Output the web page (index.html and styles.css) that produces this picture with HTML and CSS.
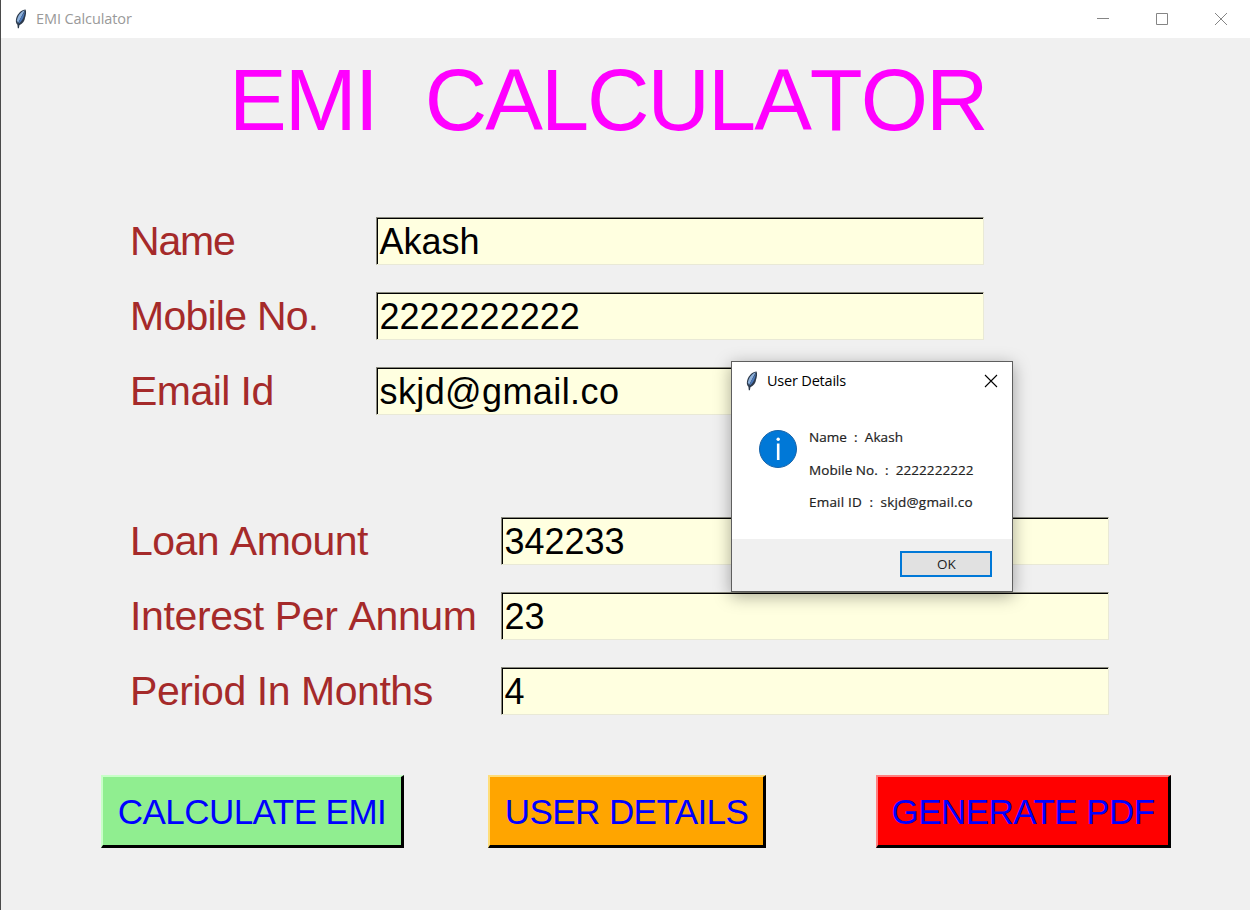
FILE: index.html
```html
<!DOCTYPE html>
<html lang="en">
<head>
<meta charset="utf-8">
<title>EMI Calculator</title>
<link rel="stylesheet" href="styles.css">
</head>
<body>
<svg width="0" height="0" class="defs" aria-hidden="true">
  <symbol id="feather" viewBox="0 0 12 20">
    <path d="M10.600.5C6.800.7 2.600 4.400 1.200 9.200.5 12 .8 14 2.400 15.800L2.800 19.300h1.100l.5-3C8 14.500 9.700 11.500 10 9c1-2.700 1.500-6.200.6-8.500z" fill="#2c3a4c"/>
    <path d="M9.800 1.300C6.600 2.300 2.800 6 1.900 11.500L3 14z" fill="#8fb2dc"/>
    <path d="M10 2C8 6 5 9 3.500 14.800 7.300 12.500 9.400 7 10 2z" fill="#4a78ba"/>
  </symbol>
</svg>
<div class="window">
  <header class="titlebar">
    <svg class="feather"><use href="#feather"/></svg>
    <span class="titlebar-text">EMI Calculator</span>
    <div class="controls">
      <svg width="14" height="14"><path d="M1 6.500h12"/></svg>
      <svg width="14" height="14"><path d="M1.500 1.500h11v11h-11z"/></svg>
      <svg width="14" height="14"><path d="M1 1l12 12M13 1L1 13"/></svg>
    </div>
  </header>
  <main class="content">
    <h1 class="heading">EMI&nbsp; CALCULATOR</h1>
    <section class="form user">
      <label class="label name">Name</label><div class="entry">Akash</div>
      <label class="label mobile">Mobile No.</label><div class="entry">2222222222</div>
      <label class="label">Email Id</label><div class="entry email">skjd@gmail.co</div>
    </section>
    <section class="form loan">
      <label class="label">Loan Amount</label><div class="entry">342233</div>
      <label class="label interest">Interest Per Annum</label><div class="entry">23</div>
      <label class="label period">Period In Months</label><div class="entry">4</div>
    </section>
    <div class="actions">
      <button class="action calculate">CALCULATE EMI</button>
      <button class="action details">USER DETAILS</button>
      <button class="action pdf">GENERATE PDF</button>
    </div>
  </main>
</div>
<div class="dialog">
  <div class="dialog-title">
    <svg class="feather"><use href="#feather"/></svg>
    <span>User Details</span>
    <svg class="dialog-close" width="14" height="14"><path d="M1 1l12 12M13 1L1 13"/></svg>
  </div>
  <div class="dialog-body">
    <svg class="info" width="38" height="38" viewBox="0 0 38 38"><circle cx="19" cy="19" r="18.500" fill="#0078d7" stroke="#1763a8"/><circle cx="19.200" cy="9.300" r="1.700" fill="#fff"/><path d="M19.200 13.500V30" stroke="#fff" stroke-width="2.600"/></svg>
    <div class="message">
      <p>Name&nbsp; :&nbsp; Akash</p>
      <p>Mobile No.&nbsp; :&nbsp; 2222222222</p>
      <p class="message-email">Email ID&nbsp; :&nbsp; skjd@gmail.co</p>
    </div>
  </div>
  <div class="dialog-footer"><button class="ok">OK</button></div>
</div>
</body>
</html>
```
FILE: styles.css
```css
* { box-sizing: border-box; }
body {
  margin: 0;
  width: 1250px;
  height: 910px;
  overflow: hidden;
  background: #f0f0f0;
  font-family: "Liberation Sans", Arial, sans-serif;
  font-kerning: none;
}
.defs { position: absolute; }
.window { height: 910px; border-left: 1px solid #4a4a4a; }
.titlebar {
  display: flex;
  align-items: center;
  height: 38px;
  padding: 0 22px 0 14px;
  background: #fff;
  color: #999;
  font: 14.5px/36px "Open Sans", "Noto Sans", sans-serif;
}
.feather { width: 12px; height: 20px; flex: none; }
.titlebar-text { margin-left: 9px; letter-spacing: -0.1px; }
.controls { display: flex; gap: 45px; margin-left: auto; }
.controls svg { fill: none; stroke: #858585; stroke-width: 1; }
.content { display: flex; flex-direction: column; }
.heading {
  margin: 14px 0 0 228px;
  height: 96px;
  line-height: 96px;
  font-size: 86.5px;
  font-weight: 400;
  letter-spacing: -2px;
  word-spacing: 2px;
  color: #f0f;
  white-space: nowrap;
}
.form {
  display: grid;
  grid-auto-rows: 48px;
  row-gap: 27px;
  margin-left: 130px;
}
.user { grid-template-columns: 245px 608px; margin-top: 69px; }
.loan { grid-template-columns: 370px 608px; margin-top: 102px; }
.label {
  line-height: 49px;
  font-size: 41px;
  letter-spacing: -0.55px;
  text-indent: -1px;
  color: #a52a2a;
  white-space: nowrap;
}
.name { letter-spacing: -1.2px; }
.mobile { letter-spacing: -0.75px; }
.interest { letter-spacing: -0.37px; }
.period { letter-spacing: -0.45px; }
.entry {
  border: 1px solid;
  border-color: #88887c #e9e9d6 #e9e9d6 #88887c;
  box-shadow: inset 1px 1px #000;
  background: #ffffe0;
  padding-left: 2.5px;
  font-size: 36px;
  line-height: 48px;
  color: #000;
}
.email { letter-spacing: 0.4px; }
.actions { display: flex; margin: 60px 0 0 100px; }
.action {
  height: 73px;
  padding: 2px 0 0;
  border: solid #000;
  border-width: 2px 3px 3px 2px;
  border-radius: 0;
  font: 35px/66px "Liberation Sans", Arial, sans-serif;
  letter-spacing: -0.55px;
  color: #00f;
  white-space: nowrap;
}
.calculate { width: 303px; background: #90ee90; border-top-color: #c8ffc8; border-left-color: #c8ffc8; }
.details { width: 278px; margin-left: 84px; background: #ffa500; border-top-color: #ffdd78; border-left-color: #ffdd78; }
.pdf { width: 295px; margin-left: 110px; background: #f00; border-top-color: #ff8080; border-left-color: #ff8080; }
.dialog {
  position: absolute;
  left: 731px;
  top: 361px;
  width: 282px;
  height: 231px;
  display: flex;
  flex-direction: column;
  border: 1px solid #5e5e5e;
  background: #fff;
  box-shadow: 0 4px 16px rgba(0, 0, 0, 0.35);
  font-family: "Open Sans", "Noto Sans", sans-serif;
  color: #000;
}
.dialog-title {
  display: flex;
  align-items: center;
  height: 37px;
  padding: 0 14px;
  font-size: 14.5px;
  letter-spacing: -0.2px;
}
.dialog-title span { margin-left: 9px; }
.dialog-close { margin-left: auto; fill: none; stroke: #000; stroke-width: 1.1; }
.dialog-body { display: flex; flex: 1; padding: 31px 0 0 27px; }
.info { flex: none; }
.message {
  margin-left: 12px;
  padding-top: 1px;
  font-size: 13.5px;
  letter-spacing: 0.06px;
  color: #222;
  -webkit-text-stroke: 0.2px #222;
}
.message p { margin: -4px 0 16.500px; line-height: 20px; white-space: nowrap; }
.message-email { letter-spacing: 0.2px; }
.dialog-footer {
  display: flex;
  justify-content: flex-end;
  height: 52px;
  padding: 12px 20px 0 0;
  background: #f0f0f0;
}
.ok {
  width: 92px;
  height: 26px;
  padding: 0 0 0 1px;
  border: 2px solid #0078d7;
  background: #e1e1e1;
  font: 13.5px/22px "Open Sans", "Noto Sans", sans-serif;
  color: #222;
}
```
